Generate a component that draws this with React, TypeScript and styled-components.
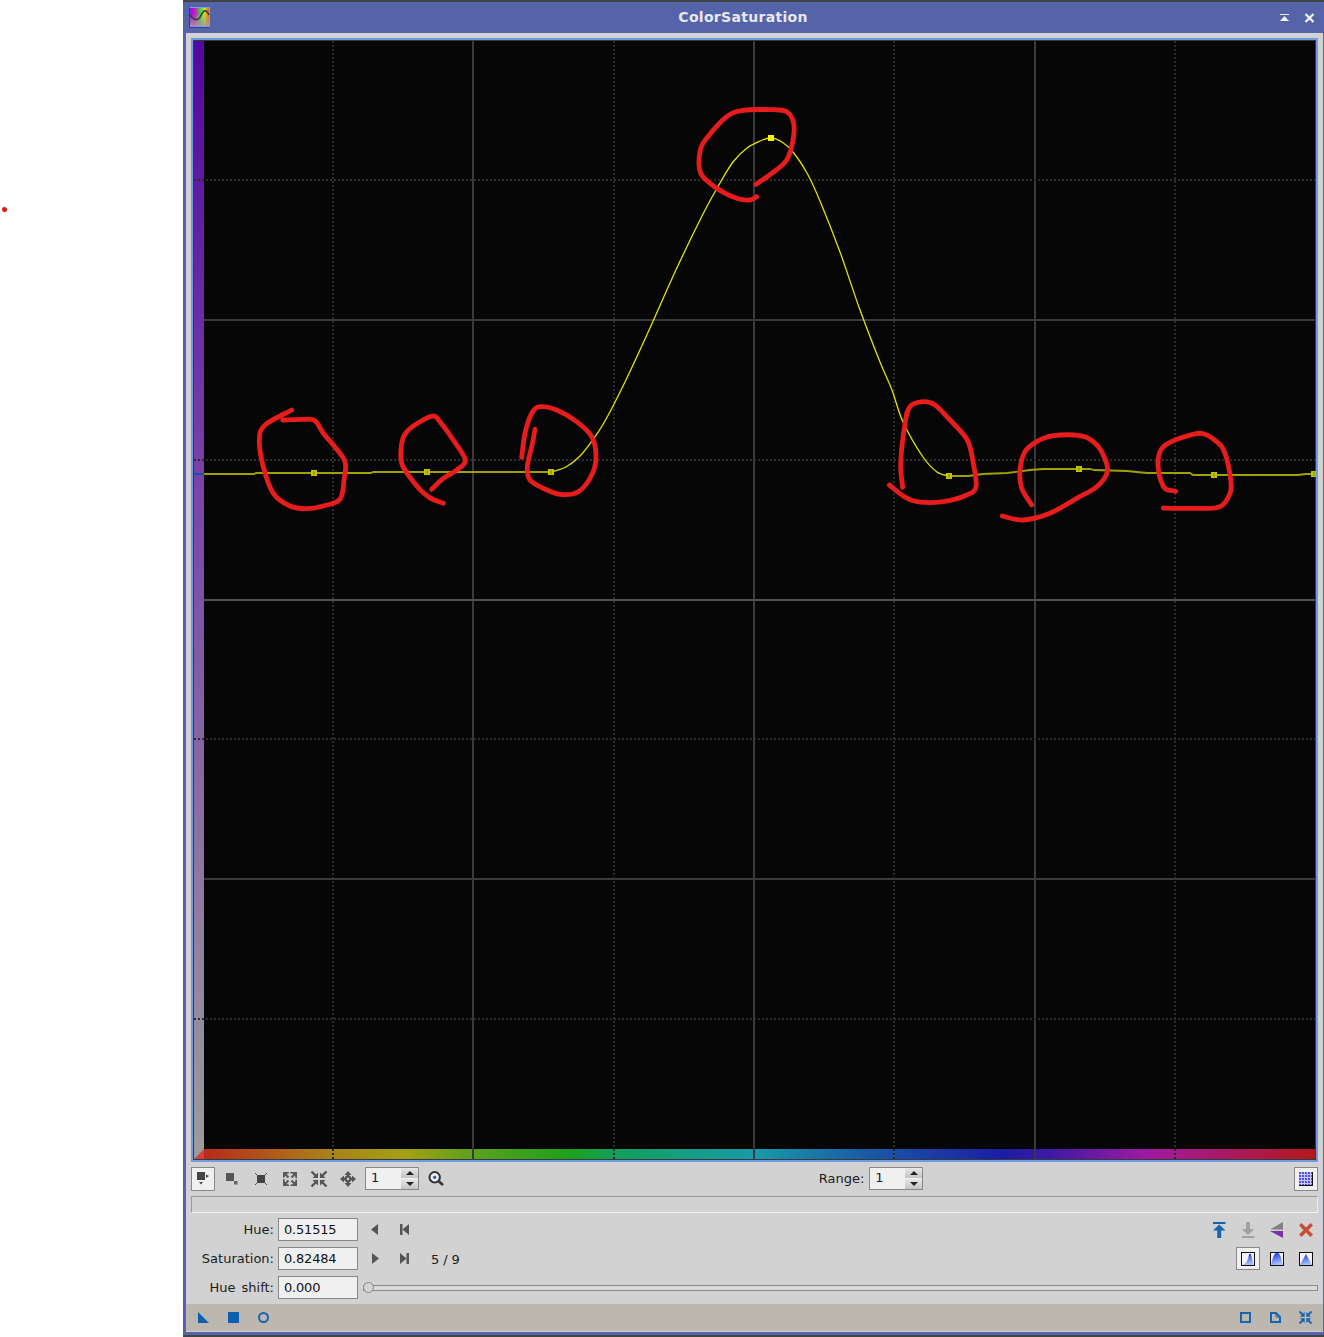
import React from "react";
import styled, { createGlobalStyle } from "styled-components";

const Global = createGlobalStyle`
  html, body { margin: 0; padding: 0; background: #fff; overflow: hidden; }
  #root { width: 1324px; height: 1337px; }
`;

const Page = styled.div`
  display: flex;
  width: 1324px;
  height: 1337px;
  background: #fff;
  font-family: "DejaVu Sans", "Liberation Sans", sans-serif;
  font-size: 13px;
  color: #1c1c1c;
`;
const Margin = styled.div`
  flex: 0 0 183px;
  box-sizing: border-box;
  padding: 207px 0 0 2px;
`;
const Dot = styled.div`
  width: 5px;
  height: 5px;
  border-radius: 50%;
  background: #e01818;
`;
const Win = styled.div`
  flex: 1;
  display: flex;
  flex-direction: column;
  height: 1337px;
  box-sizing: border-box;
  background: #5563a8;
  border-top: 2px solid #444;
  border-bottom: 2px solid #444;
  padding: 0 1px 3px 3px;
`;
const TitleBar = styled.div`
  display: flex;
  align-items: center;
  height: 31px;
`;
const TitleIcon = styled.svg`
  display: block;
  width: 21px;
  height: 21px;
  margin-left: 3px;
  flex-shrink: 0;
`;
const Title = styled.div`
  flex: 1;
  text-align: center;
  font-weight: 700;
  font-size: 14px;
  letter-spacing: 0.3px;
  padding-bottom: 2px;
  color: #e8e8ee;
`;
const TitleButtons = styled.svg`
  display: block;
  width: 47px;
  height: 31px;
  flex-shrink: 0;
`;
const Client = styled.div`
  flex: 1;
  display: flex;
  flex-direction: column;
  background: #d2d2d2;
`;
const Controls = styled.div`
  display: flex;
  flex-direction: column;
  padding: 5px 5px;
  gap: 5px;
`;
const PlotFrame = styled.div`
  border: 2px solid #6f9be0;
  height: 1120px;
  width: 1123px;
`;
const PlotSvg = styled.svg`
  display: block;
  width: 1123px;
  height: 1120px;
`;
const Toolbar = styled.div`
  display: flex;
  align-items: flex-start;
  gap: 5px;
  height: 24px;
`;
const Spacer = styled.div`
  flex: 1;
`;
const ToolButton = styled.div<{ $on?: boolean; $h?: number }>`
  flex: 0 0 24px;
  min-width: 0;
  box-sizing: border-box;
  height: ${(p) => p.$h ?? 24}px;
  display: flex;
  align-items: center;
  justify-content: center;
  border: 1px solid ${(p) => (p.$on ? "#888" : "transparent")};
  background: ${(p) => (p.$on ? "#f0f0f0" : "transparent")};
`;
const GlyphSvg = styled.svg<{ $h: number }>`
  display: block;
  flex-shrink: 0;
  width: 24px;
  height: ${(p) => p.$h}px;
`;
const Spin = styled.div`
  flex: 0 0 54px;
  box-sizing: border-box;
  height: 23px;
  display: flex;
  border: 1px solid #888;
  background: #f0f0f0;
`;
const SpinValue = styled.div`
  flex: 1;
  padding-left: 5px;
  line-height: 20px;
  color: #102040;
`;
const SpinArrows = styled.div`
  flex: 0 0 17px;
  display: flex;
  flex-direction: column;
`;
const SpinArrow = styled.div<{ $down?: boolean }>`
  flex: 1;
  display: flex;
  align-items: center;
  justify-content: center;
  background: linear-gradient(#e8e8e8, #c4c4c4);
  border-top: ${(p) => (p.$down ? "1px solid #f0f0f0" : "0")};
  &::after {
    content: "";
    width: 0;
    height: 0;
    border-left: 4px solid transparent;
    border-right: 4px solid transparent;
    ${(p) => (p.$down ? "border-top: 4px solid #222;" : "border-bottom: 4px solid #222;")}
  }
`;
const RangeLabel = styled.div`
  line-height: 24px;
`;
const EmptyBox = styled.div`
  height: 17px;
  box-sizing: border-box;
  border: 1px solid #999;
  border-right-color: #ececec;
  border-bottom-color: #f2f2f2;
`;
const Rows = styled.div`
  display: flex;
  flex-direction: column;
  gap: 6px;
`;
const Row = styled.div`
  display: flex;
  align-items: center;
  height: 23px;
`;
const Label = styled.div`
  flex: 0 0 83px;
  text-align: right;
  word-spacing: 2px;
`;
const Field = styled.div`
  flex: 0 0 80px;
  box-sizing: border-box;
  height: 23px;
  margin: 0 5px 0 4px;
  padding-left: 5px;
  border: 1px solid #888;
  background: #f0f0f0;
  line-height: 21px;
  letter-spacing: -0.2px;
  color: #111;
`;
const NavGroup = styled.div`
  display: flex;
  gap: 5px;
`;
const Count = styled.div`
  margin-left: 15px;
  line-height: 24px;
  padding-top: 2px;
  letter-spacing: -0.1px;
`;
const RightGroup = styled.div`
  margin-left: auto;
  display: flex;
  gap: 5px;
`;
const Slider = styled.div`
  position: relative;
  flex: 1;
  height: 23px;
  display: flex;
  align-items: center;
`;
const Track = styled.div`
  flex: 1;
  box-sizing: border-box;
  height: 6px;
  margin-top: 1px;
  border: 1px solid #8a8a8a;
  background: #dadada;
`;
const Handle = styled.div`
  position: absolute;
  left: 0;
  top: 6px;
  width: 11px;
  height: 11px;
  box-sizing: border-box;
  border: 1px solid #888;
  border-radius: 50%;
  background: #d4d4d4;
`;
const BottomBar = styled.div`
  height: 27px;
  display: flex;
  gap: 6px;
  padding: 0 6px 0 5px;
  background: #bcb8b0;
`;

const Glyph = ({ h = 24, children }: { h?: number; children: React.ReactNode }) => (
  <GlyphSvg $h={h} viewBox={`0 0 24 ${h}`}>
    {children}
  </GlyphSvg>
);

const smooth = (pts: number[][]) => {
  let d = `M${pts[0][0]} ${pts[0][1]}`;
  for (let i = 0; i < pts.length - 1; i++) {
    const p0 = pts[Math.max(i - 1, 0)];
    const p1 = pts[i];
    const p2 = pts[i + 1];
    const p3 = pts[Math.min(i + 2, pts.length - 1)];
    const c1x = p1[0] + (p2[0] - p0[0]) / 6;
    const c1y = p1[1] + (p2[1] - p0[1]) / 6;
    const c2x = p2[0] - (p3[0] - p1[0]) / 6;
    const c2y = p2[1] - (p3[1] - p1[1]) / 6;
    d += ` C${c1x.toFixed(1)} ${c1y.toFixed(1)} ${c2x.toFixed(1)} ${c2y.toFixed(1)} ${p2[0]} ${p2[1]}`;
  }
  return d;
};

const strokes: number[][][] = [
  [[291.7,410],[265,425],[259.3,440],[263.3,466.7],[273.3,493.3],[290,506],[306.7,508.7],[323.3,506],[340,499.3],[344,480],[345,461.7],[333.3,445],[323.3,433.3],[315,420.7],[303.3,419.3],[282.7,420]],
  [[431.7,489.3],[443.3,478.3],[456.7,470],[465.3,460],[453.3,440],[440,421.7],[433.3,416],[420,421.7],[406.7,431.7],[401.7,443.3],[401.7,463.3],[413.3,481.7],[428.3,496.7],[443.3,503.3]],
  [[521.7,457.3],[525,433.3],[531.7,413.3],[540,406.7],[556.7,410],[576.7,421.7],[591.7,436.7],[596,456.7],[591.7,475],[578.3,491.7],[560,494.3],[543.3,488.3],[530,480],[527.3,466.7],[531.7,446.7],[535,429.3]],
  [[756,184.3],[771.7,173.3],[786.7,160],[793.3,138.3],[793.3,121.7],[786.7,111.7],[773.3,109.7],[743.3,110.3],[726.7,116.7],[706.7,138.3],[700,151.7],[700.7,173.3],[716.7,188.3],[736.7,198.3],[750,200],[756.7,196.7]],
  [[902.7,487.3],[900.7,463.3],[905,423.3],[910,406.7],[923.3,401.7],[935,405],[950,420],[967.3,440],[973.3,463.3],[976,486.7],[966.7,495],[943.3,501.7],[916.7,501.7],[903.3,496],[889.3,485]],
  [[1031.7,505],[1021.7,488.3],[1020,470],[1025,451.7],[1036.7,441.7],[1053.3,435.7],[1080,435.7],[1093.3,441.7],[1103.3,455],[1107.3,471.7],[1096.7,486.7],[1076.7,498.3],[1050,513.3],[1023.3,520],[1002.3,516]],
  [[1175.7,491.3],[1165,488.3],[1159.3,475],[1158.3,458.3],[1163.3,446.7],[1180,438.3],[1201.7,433.3],[1216.7,441.7],[1225,453.3],[1230.7,480],[1230,493.3],[1220,506.7],[1200,508.3],[1163.3,508]],
];

const curve: number[][] = [
  [551,472],[566,467],[580,456],[592,441],[605,421],[625,382],[650,328],[675,272],[703,214],[720,183],[733,162],[747,148],[760,141],[771,138],[782,142],[793,152],[807,173],[820,201],[840,252],[860,310],[880,362],[892,390],[903,422],[923,457],[937,472],[949,476],
];
const flatLeft = "204,474 254,474 256,473 371,473 373,472 551,472";
const flatRight = "949,476 968,476 983,474 1007,473 1030,470 1043,469 1090,469 1094,470 1127,471 1147,473 1190,473 1193,475 1298,475 1305,474 1315,474";
const handles = [[314,473],[427,472],[551,472],[949,476],[1079,469],[1214,475],[1314,474]];

const vDotted = [333, 614, 894, 1175];
const vSolid = [473, 754, 1035];
const hDotted = [180, 460, 739, 1019];
const hSolid = [320, 879];

const Plot = () => (
  <PlotSvg viewBox="193 40 1123 1120">
    <defs>
      <linearGradient id="satBar" x1="0" y1="0" x2="0" y2="1">
        <stop offset="0" stopColor="#52089e" />
        <stop offset="0.4" stopColor="#7a44a8" />
        <stop offset="1" stopColor="#9c9c9c" />
      </linearGradient>
      <linearGradient id="hueBar" x1="0" y1="0" x2="1" y2="0">
        <stop offset="0" stopColor="#b82a1c" />
        <stop offset="0.11" stopColor="#a8801a" />
        <stop offset="0.18" stopColor="#a4a014" />
        <stop offset="0.245" stopColor="#5aa01e" />
        <stop offset="0.33" stopColor="#1ea01e" />
        <stop offset="0.37" stopColor="#12a05a" />
        <stop offset="0.495" stopColor="#1a9aa8" />
        <stop offset="0.6" stopColor="#1a58a4" />
        <stop offset="0.72" stopColor="#1c1ca4" />
        <stop offset="0.76" stopColor="#3c1aa4" />
        <stop offset="0.85" stopColor="#a01aa0" />
        <stop offset="1" stopColor="#b4181c" />
      </linearGradient>
    </defs>
    <rect x="193" y="40" width="1123" height="1120" fill="#3a3a3a" />
    <rect x="204" y="41" width="1111" height="1108" fill="#060606" />
    <rect x="194" y="41" width="10" height="1118" fill="url(#satBar)" />
    <rect x="204" y="1149" width="1111" height="10" fill="url(#hueBar)" />
    <polygon points="194,1159 204,1149 204,1159" fill="#d8403c" />
    <g shapeRendering="crispEdges" strokeWidth="2">
      {vSolid.map((x) => (
        <line key={x} x1={x} y1="41" x2={x} y2="1159" stroke="#3a3a3a" />
      ))}
      {hSolid.map((y) => (
        <line key={y} x1="204" y1={y} x2="1315" y2={y} stroke="#3a3a3a" />
      ))}
      <line x1="204" y1="600" x2="1315" y2="600" stroke="#505050" />
      {vDotted.map((x) => (
        <line key={x} x1={x} y1="41" x2={x} y2="1159" stroke="#2c2c2c" strokeDasharray="2 2" />
      ))}
      {hDotted.map((y) => (
        <line key={y} x1="194" y1={y} x2="1315" y2={y} stroke="#2c2c2c" strokeDasharray="2 2" />
      ))}
    </g>
    <line x1="194" y1="474" x2="204" y2="474" stroke="#1a4fa0" strokeWidth="2" />
    <polyline points={flatLeft} fill="none" stroke="#a0a000" strokeWidth="1.8" />
    <polyline points={flatRight} fill="none" stroke="#a0a000" strokeWidth="1.8" />
    <path d={smooth(curve)} fill="none" stroke="#e4e400" strokeWidth="1.3" />
    {handles.map(([x, y]) => (
      <g key={x}>
        <rect x={x - 3} y={y - 3} width="6" height="6" fill="#c4c400" />
        <rect x={x - 0.5} y={y - 2} width="1" height="4" fill="#808000" />
      </g>
    ))}
    <rect x="768" y="135" width="6" height="6" fill="#f4f400" />
    {strokes.map((s, i) => (
      <path key={i} d={smooth(s)} fill="none" stroke="#e81c1c" strokeWidth="4.8" strokeLinecap="round" strokeLinejoin="round" />
    ))}
  </PlotSvg>
);

const HistGlyph = ({ id, d, h = 23 }: { id: string; d: string; h?: number }) => (
  <Glyph h={h}>
    <defs>
      <linearGradient id={id} x1="0" y1="0" x2="0.3" y2="1">
        <stop offset="0" stopColor="#0c28e0" />
        <stop offset="1" stopColor="#a8c0f8" />
      </linearGradient>
    </defs>
    <rect x="5.5" y="5.5" width="13" height="13" fill="#f4f4f4" stroke="#111" />
    <path d={d} fill={`url(#${id})`} />
  </Glyph>
);

const App = () => (
  <Page>
    <Global />
    <Margin>
      <Dot />
    </Margin>
    <Win>
      <TitleBar>
        <TitleIcon viewBox="0 0 21 21">
          <defs>
            <linearGradient id="tiH" x1="0" y1="0" x2="1" y2="0">
              <stop offset="0" stopColor="#6a20e8" />
              <stop offset="0.28" stopColor="#e010c0" />
              <stop offset="0.52" stopColor="#30d050" />
              <stop offset="0.75" stopColor="#d0e020" />
              <stop offset="1" stopColor="#f05010" />
            </linearGradient>
            <linearGradient id="tiV" x1="0" y1="0" x2="0" y2="1">
              <stop offset="0.3" stopColor="#a89a98" stopOpacity="0" />
              <stop offset="1" stopColor="#a89a98" stopOpacity="1" />
            </linearGradient>
          </defs>
          <rect x="0.5" y="0.5" width="20" height="20" fill="url(#tiH)" />
          <rect x="0.5" y="0.5" width="20" height="20" fill="url(#tiV)" />
          <path d="M0.5 0.5H20.5V20.5" fill="none" stroke="#7aa0e0" />
          <path d="M0.5 0.5V20.5H20.5" fill="none" stroke="#2233e8" />
          <path d="M1 8C4 12 7 14 10 11.5C12.5 9 13 4 16 3.7C18 3.5 19 6 20 8" fill="none" stroke="#3a3a3a" strokeWidth="1.6" />
        </TitleIcon>
        <Title>ColorSaturation</Title>
        <TitleButtons viewBox="0 0 47 31">
          <rect x="4" y="12" width="9" height="1" fill="#f0f0f0" />
          <polygon points="4,19 8.5,14 13,19" fill="#f0f0f0" />
          <path d="M29.5 12 L37.5 20 M37.5 12 L29.5 20" stroke="#f4f4f4" strokeWidth="2.2" fill="none" />
        </TitleButtons>
      </TitleBar>
      <Client>
        <Controls>
          <PlotFrame>
            <Plot />
          </PlotFrame>
          <Toolbar>
            <ToolButton $on>
              <Glyph>
                <rect x="6" y="5" width="8" height="8" fill="#444" />
                <polygon points="15,7.5 18,9 15,11" fill="#444" />
                <polygon points="8,15 12,15 10,17.5" fill="#444" />
              </Glyph>
            </ToolButton>
            <ToolButton>
              <Glyph>
                <rect x="6" y="6" width="8" height="8" fill="#555" />
                <rect x="14" y="14" width="3.5" height="3.5" fill="#666" />
              </Glyph>
            </ToolButton>
            <ToolButton>
              <Glyph>
                <path d="M6 6L18 18M18 6L6 18" stroke="#555" strokeWidth="1" />
                <rect x="8" y="8" width="8" height="8" fill="#444" />
              </Glyph>
            </ToolButton>
            <ToolButton>
              <Glyph>
                <rect x="5.8" y="5.8" width="12.4" height="12.4" fill="none" stroke="#5a5a5a" strokeWidth="1.6" strokeDasharray="5 1.4 5 1.4" />
                <polygon points="5,5 11,5 5,11" fill="#5a5a5a" />
                <polygon points="19,5 13,5 19,11" fill="#5a5a5a" />
                <polygon points="5,19 11,19 5,13" fill="#5a5a5a" />
                <polygon points="19,19 13,19 19,13" fill="#5a5a5a" />
                <path d="M7 7L10.5 10.5M17 7L13.5 10.5M7 17L10.5 13.5M17 17L13.5 13.5" stroke="#5a5a5a" strokeWidth="2.2" />
              </Glyph>
            </ToolButton>
            <ToolButton>
              <Glyph>
                <path d="M4.5 4.5L9 9M19.5 4.5L15 9M4.5 19.5L9 15M19.5 19.5L15 15" stroke="#555" strokeWidth="2.4" />
                <polygon points="11,11 11,5.5 5.5,11" fill="#555" />
                <polygon points="13,11 13,5.5 18.5,11" fill="#555" />
                <polygon points="11,13 11,18.5 5.5,13" fill="#555" />
                <polygon points="13,13 13,18.5 18.5,13" fill="#555" />
              </Glyph>
            </ToolButton>
            <ToolButton>
              <Glyph>
                <polygon points="12,4 15.5,8 8.5,8" fill="#555" />
                <polygon points="12,20 15.5,16 8.5,16" fill="#555" />
                <polygon points="4,12 8,8.5 8,15.5" fill="#555" />
                <polygon points="20,12 16,8.5 16,15.5" fill="#555" />
                <path d="M12 8V16M8 12H16" stroke="#555" strokeWidth="2.4" />
                <circle cx="12" cy="12" r="3.4" fill="#555" />
                <circle cx="12" cy="12" r="1.3" fill="#d2d2d2" />
              </Glyph>
            </ToolButton>
            <Spin>
              <SpinValue>1</SpinValue>
              <SpinArrows>
                <SpinArrow />
                <SpinArrow $down />
              </SpinArrows>
            </Spin>
            <ToolButton>
              <Glyph>
                <path d="M15 14.5L19 18" stroke="#333" strokeWidth="2.6" />
                <circle cx="10.7" cy="10.3" r="5.2" fill="#ececec" stroke="#333" strokeWidth="2" />
                <circle cx="10.7" cy="10.3" r="1.6" fill="#1060c0" />
              </Glyph>
            </ToolButton>
            <Spacer />
            <RangeLabel>Range:</RangeLabel>
            <Spin>
              <SpinValue>1</SpinValue>
              <SpinArrows>
                <SpinArrow />
                <SpinArrow $down />
              </SpinArrows>
            </Spin>
            <Spacer />
            <ToolButton $on>
              <Glyph>
                <rect x="5" y="5" width="14" height="14" fill="#5050ee" />
                <path d="M7.5 5V19M10.5 5V19M13.5 5V19M16.5 5V19M5 7.5H19M5 10.5H19M5 13.5H19M5 16.5H19" stroke="#c8c8f8" strokeWidth="1" />
                <path d="M18.5 5V18.5H5" fill="none" stroke="#111" />
              </Glyph>
            </ToolButton>
          </Toolbar>
          <EmptyBox />
          <Rows>
            <Row>
              <Label>Hue:</Label>
              <Field>0.51515</Field>
              <NavGroup>
                <ToolButton $h={23}>
                  <Glyph h={23}>
                    <polygon points="15,6 8,11.5 15,17" fill="#555" />
                  </Glyph>
                </ToolButton>
                <ToolButton $h={23}>
                  <Glyph h={23}>
                    <rect x="8" y="6" width="2.5" height="11" fill="#555" />
                    <polygon points="17,6 10.5,11.5 17,17" fill="#555" />
                  </Glyph>
                </ToolButton>
              </NavGroup>
              <RightGroup>
                <ToolButton $h={23}>
                  <Glyph h={23}>
                    <rect x="6" y="4" width="12.5" height="2" fill="#1565ae" />
                    <polygon points="12.2,6.5 18.5,12.5 14.2,12.5 14.2,20 10.2,20 10.2,12.5 6,12.5" fill="#1565ae" />
                  </Glyph>
                </ToolButton>
                <ToolButton $h={23}>
                  <Glyph h={23}>
                    <polygon points="10,4 14,4 14,11 18.2,11 12,17 5.8,11 10,11" fill="#a2a2a2" />
                    <rect x="6" y="18" width="12.5" height="2" fill="#a2a2a2" />
                  </Glyph>
                </ToolButton>
                <ToolButton $h={23}>
                  <Glyph h={23}>
                    <polygon points="5,11.5 18,4 18,11.5" fill="#828282" />
                    <polygon points="5,13 18,13 18,20" fill="#7b2fa8" />
                  </Glyph>
                </ToolButton>
                <ToolButton $h={23}>
                  <Glyph h={23}>
                    <path d="M6.3 6.3L17.7 17.7M17.7 6.3L6.3 17.7" stroke="#c84b32" strokeWidth="3.4" />
                  </Glyph>
                </ToolButton>
              </RightGroup>
            </Row>
            <Row>
              <Label>Saturation:</Label>
              <Field>0.82484</Field>
              <NavGroup>
                <ToolButton $h={23}>
                  <Glyph h={23}>
                    <polygon points="9,6 16,11.5 9,17" fill="#555" />
                  </Glyph>
                </ToolButton>
                <ToolButton $h={23}>
                  <Glyph h={23}>
                    <polygon points="8,6 14.5,11.5 8,17" fill="#555" />
                    <rect x="14.5" y="6" width="2.5" height="11" fill="#555" />
                  </Glyph>
                </ToolButton>
              </NavGroup>
              <Count>5 / 9</Count>
              <RightGroup>
                <ToolButton $h={23} $on>
                  <HistGlyph id="h1" d="M6 18 C10 17 12 14 13 7 L15 7 C16 11 17 16 18 18 Z" />
                </ToolButton>
                <ToolButton $h={23}>
                  <HistGlyph id="h2" d="M6 18 C7 15 8 7 11 6 L13 6 C16 7 17 15 18 18 Z" />
                </ToolButton>
                <ToolButton $h={23}>
                  <HistGlyph id="h3" d="M6 18 L12 7 L18 18 Z" />
                </ToolButton>
              </RightGroup>
            </Row>
            <Row>
              <Label>Hue shift:</Label>
              <Field>0.000</Field>
              <Slider>
                <Track />
                <Handle />
              </Slider>
            </Row>
          </Rows>
        </Controls>
        <BottomBar>
          <ToolButton $h={27}>
            <Glyph h={27}>
              <polygon points="7,8 18,19 7,19" fill="#0d5fb0" />
            </Glyph>
          </ToolButton>
          <ToolButton $h={27}>
            <Glyph h={27}>
              <rect x="7" y="8" width="11" height="11" fill="#0d5fb0" />
            </Glyph>
          </ToolButton>
          <ToolButton $h={27}>
            <Glyph h={27}>
              <circle cx="12.5" cy="13.5" r="4.5" fill="none" stroke="#1565b0" strokeWidth="2" />
            </Glyph>
          </ToolButton>
          <Spacer />
          <ToolButton $h={27}>
            <Glyph h={27}>
              <rect x="8" y="9" width="9" height="9" fill="none" stroke="#1565b0" strokeWidth="2" />
            </Glyph>
          </ToolButton>
          <ToolButton $h={27}>
            <Glyph h={27}>
              <path d="M8 9H13L17 13V18H8Z" fill="none" stroke="#1565b0" strokeWidth="2" />
              <path d="M13 9V13H17" fill="none" stroke="#1565b0" strokeWidth="1" />
            </Glyph>
          </ToolButton>
          <ToolButton $h={27}>
            <Glyph h={27}>
              <path d="M6.5 7.5L10 11M18.5 7.5L15 11M6.5 19.5L10 16M18.5 19.5L15 16" stroke="#1565b0" strokeWidth="1.8" />
              <polygon points="11.7,12.7 11.7,8 7,12.7" fill="#1565b0" />
              <polygon points="13.3,12.7 13.3,8 18,12.7" fill="#1565b0" />
              <polygon points="11.7,14.3 11.7,19 7,14.3" fill="#1565b0" />
              <polygon points="13.3,14.3 13.3,19 18,14.3" fill="#1565b0" />
            </Glyph>
          </ToolButton>
        </BottomBar>
      </Client>
    </Win>
  </Page>
);

export default App;
